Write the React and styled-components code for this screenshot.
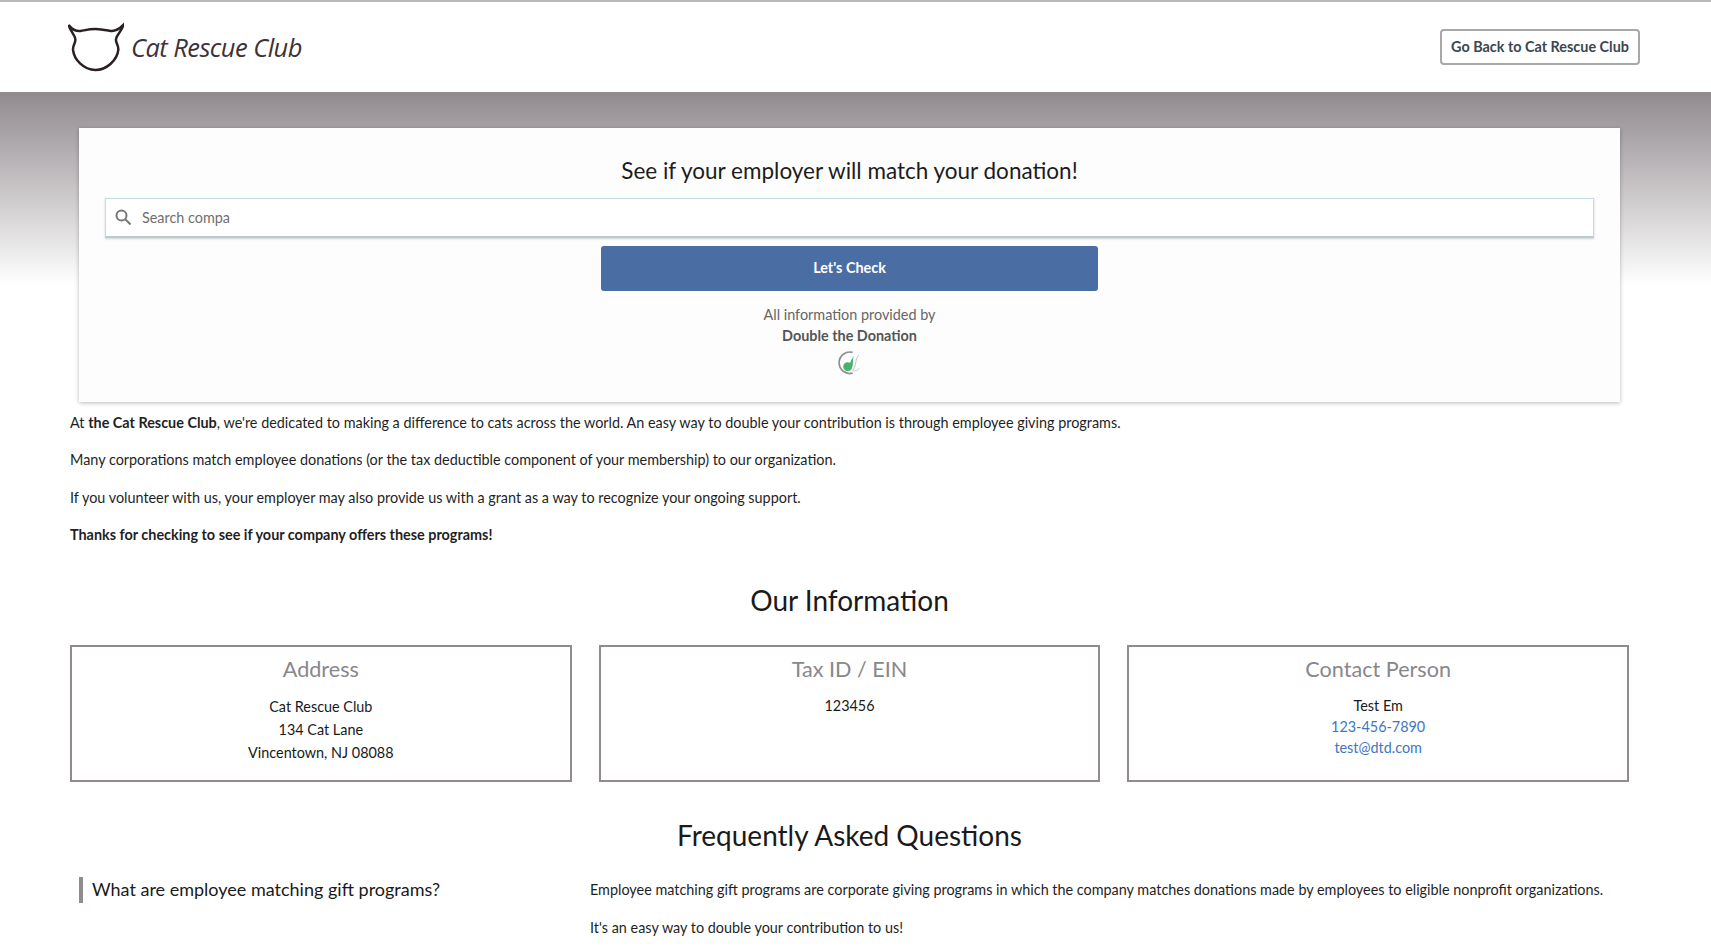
import React from "react";
import styled, { createGlobalStyle } from "styled-components";

const Global = createGlobalStyle`
  html, body { margin: 0; padding: 0; height: 952px; overflow: hidden; background: #fff; }
  body { font-family: Lato, "Liberation Sans", sans-serif; font-size: 14.4px; color: #1a1a1a; }
  * { box-sizing: border-box; }
`;
const Page = styled.div`
  background: linear-gradient(to bottom, #918a8e 92px, #ffffff 285px);
  height: 952px;
  overflow: hidden;
`;
const Header = styled.header`
  height: 92px;
  background: #fff;
  border-top: 2px solid #b9b9b9;
  display: flex;
  align-items: center;
  justify-content: space-between;
  padding: 0 71px 0 68px;
`;
const Brand = styled.div`
  display: flex;
  align-items: center;
  gap: 7px;
  height: 56px;
`;
const BrandName = styled.span`
  font-family: "Open Sans", sans-serif;
  font-style: italic;
  font-weight: 400;
  font-size: 25.5px;
  letter-spacing: -0.55px;
  color: #3d3237;
`;
const BackButton = styled.a`
  width: 200px;
  height: 36px;
  display: flex;
  align-items: center;
  justify-content: center;
  padding-bottom: 1px;
  border: 2px solid #a9a7a8;
  border-radius: 4px;
  font-size: 14.4px;
  font-weight: 700;
  color: #3c4650;
  background: #fff;
`;
const Card = styled.section`
  margin: 36px 91px 0 79px;
  height: 274px;
  background: #fdfdfd;
  box-shadow: 0 1px 4px rgba(0,0,0,.28);
  padding: 0 26px;
  display: flex;
  flex-direction: column;
  align-items: center;
`;
const CardTitle = styled.h1`
  margin: 27px 0 0;
  font-size: 22.5px;
  line-height: 32px;
  font-weight: 400;
  color: #1c1c1c;
`;
const SearchBox = styled.div`
  align-self: stretch;
  margin-top: 11px;
  height: 40px;
  display: flex;
  align-items: center;
  gap: 11px;
  padding: 0 0 1px 9px;
  background: #fff;
  border: 1px solid #c4dde3;
  border-bottom: 2px solid #b4ccd4;
  box-shadow: 0 1px 2px rgba(0,0,0,.18);
  color: #6f6f6f;
  font-size: 14.4px;
`;
const CheckButton = styled.button`
  margin-top: 8px;
  width: 497px;
  height: 45px;
  padding-bottom: 3px;
  border: 0;
  border-radius: 3px;
  background: #4a6da3;
  color: #fff;
  font: 700 14.4px Lato, sans-serif;
`;
const Credit = styled.p`
  margin: 13px 0 0;
  text-align: center;
  line-height: 21px;
  font-size: 14.4px;
  color: #666;
`;
const CreditName = styled.strong`
  display: block;
  color: #555;
`;
const CreditLogo = styled.svg`
  display: block;
  margin: 5px auto 0;
`;
const Intro = styled.div`
  padding: 0 82px 0 70px;
  margin-top: 9.6px;
`;
const Para = styled.p`
  margin: 0 0 16px;
  font-size: 14.4px;
  line-height: 21.6px;
  color: #1f1f1f;
`;
const SectionTitle = styled.h2`
  margin: ${p => p.$top}px 12px 0 0;
  text-align: center;
  font-size: 28px;
  line-height: 36px;
  font-weight: 400;
  color: #1a1a1a;
`;
const InfoGrid = styled.div`
  display: grid;
  grid-template-columns: repeat(3, 1fr);
  gap: 27px;
  padding: 0 82px 0 70px;
  margin-top: 27px;
`;
const InfoCard = styled.div`
  height: 137px;
  border: 2px solid #918a8e;
  text-align: center;
  padding-top: 7px;
`;
const InfoTitle = styled.h3`
  margin: 0 0 ${p => p.$gap}px;
  font-size: 21.6px;
  line-height: 30px;
  font-weight: 400;
  color: #88878c;
`;
const InfoLine = styled.div`
  font-size: 14.4px;
  line-height: ${p => p.$lh}px;
  color: ${p => (p.$link ? "#3d78bf" : "#1a1a1a")};
`;
const Faq = styled.div`
  display: grid;
  grid-template-columns: 511px 1fr;
  padding: 0 82px 0 79px;
  margin-top: 24px;
`;
const Question = styled.h4`
  margin: 0;
  height: 26px;
  border-left: 4px solid #918a8e;
  padding-left: 9px;
  font-size: 18px;
  line-height: 24px;
  font-weight: 400;
  color: #1a1a1a;
`;
const Answer = styled.div`
  padding-top: 2px;
`;

export default function App() {
  return (
    <Page>
      <Global />
      <Header>
        <Brand>
          <svg width="56" height="50" viewBox="24 21 168 150" fill="none">
            <path d="M26 30 C36 42 48 50 62 48 C78 45 88 42 106 42 C124 42 136 45 152 48 C166 50 178 42 190 30 C186 48 170 58 168 72 C166 84 176 90 175 104 C172 135 140 165 106 165 C72 165 42 135 39 104 C38 90 48 84 46 72 C44 58 30 48 26 30 Z" stroke="#2a2024" strokeWidth="7.500" strokeLinejoin="miter" />
          </svg>
          <BrandName>Cat Rescue Club</BrandName>
        </Brand>
        <BackButton>Go Back to Cat Rescue Club</BackButton>
      </Header>
      <Card>
        <CardTitle>See if your employer will match your donation!</CardTitle>
        <SearchBox>
          <svg width="16" height="16" viewBox="0 0 16 16" fill="none" stroke="#777" strokeWidth="2">
            <circle cx="6.500" cy="6.500" r="5" />
            <path d="M10.500 10.500 L15.500 15.500" />
          </svg>
          <span>Search compa</span>
        </SearchBox>
        <CheckButton>Let's Check</CheckButton>
        <Credit>
          All information provided by
          <CreditName>Double the Donation</CreditName>
        </Credit>
        <CreditLogo width="26" height="26" viewBox="21 16 75 75" fill="none">
          <path d="M66 20 A31 31 0 1 0 66 80" stroke="#8f8f8f" strokeWidth="5" />
          <path d="M84 28 C72 38 78 60 66 72 C72 76 80 72 85 66" stroke="#bbbbbb" strokeWidth="2.500" />
          <path d="M69 30 C65 38 61 44 59 50 C52 46 40 48 39 60 C38 72 52 78 61 71 C70 62 65 44 69 30 Z" fill="#45b36b" />
        </CreditLogo>
      </Card>
      <Intro>
        <Para>At <strong>the Cat Rescue Club</strong>, we're dedicated to making a difference to cats across the world. An easy way to double your contribution is through employee giving programs.</Para>
        <Para>Many corporations match employee donations (or the tax deductible component of your membership) to our organization.</Para>
        <Para>If you volunteer with us, your employer may also provide us with a grant as a way to recognize your ongoing support.</Para>
        <Para><strong>Thanks for checking to see if your company offers these programs!</strong></Para>
      </Intro>
      <SectionTitle $top={36.400}>Our Information</SectionTitle>
      <InfoGrid>
        <InfoCard>
          <InfoTitle $gap={11}>Address</InfoTitle>
          <InfoLine $lh={23}>Cat Rescue Club</InfoLine>
          <InfoLine $lh={23}>134 Cat Lane</InfoLine>
          <InfoLine $lh={23}>Vincentown, NJ 08088</InfoLine>
        </InfoCard>
        <InfoCard>
          <InfoTitle $gap={11}>Tax ID / EIN</InfoTitle>
          <InfoLine $lh={21}>123456</InfoLine>
        </InfoCard>
        <InfoCard>
          <InfoTitle $gap={11}>Contact Person</InfoTitle>
          <InfoLine $lh={21}>Test Em</InfoLine>
          <InfoLine $lh={21} $link>123-456-7890</InfoLine>
          <InfoLine $lh={21} $link>test@dtd.com</InfoLine>
        </InfoCard>
      </InfoGrid>
      <SectionTitle $top={35}>Frequently Asked Questions</SectionTitle>
      <Faq>
        <Question>What are employee matching gift programs?</Question>
        <Answer>
          <Para>Employee matching gift programs are corporate giving programs in which the company matches donations made by employees to eligible nonprofit organizations.</Para>
          <Para>It's an easy way to double your contribution to us!</Para>
        </Answer>
      </Faq>
    </Page>
  );
}
